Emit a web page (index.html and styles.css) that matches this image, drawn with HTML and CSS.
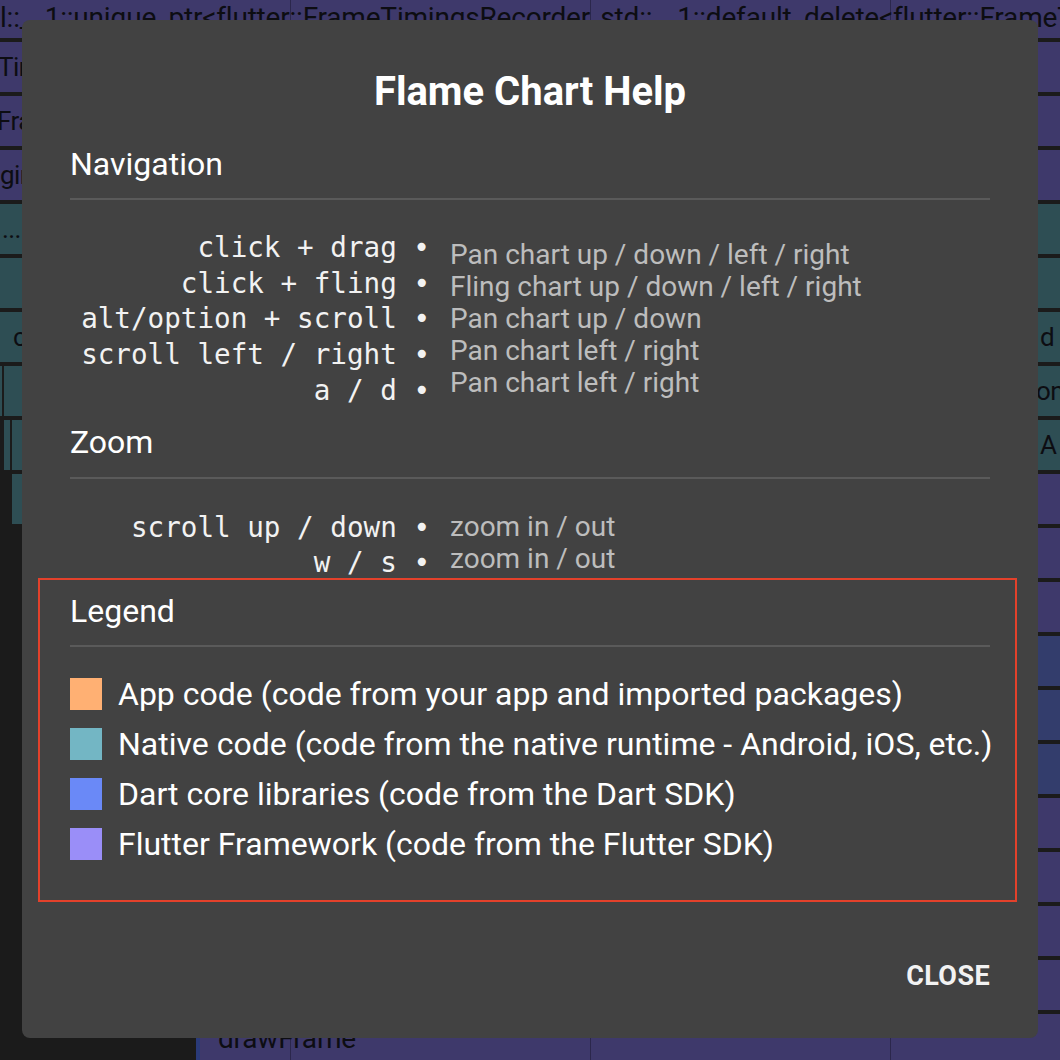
FILE: index.html
```html
<!DOCTYPE html>
<html lang="en">
<head>
<meta charset="utf-8">
<title>Flame Chart Help</title>
<link rel="stylesheet" href="styles.css">
</head>
<body>
<div class="chart">
  <div class="node purple" style="left:-4px;top:-12px;width:1070px"><span class="label big lower">l::__1::unique_ptr&lt;flutter::FrameTimingsRecorder, std::__1::default_delete&lt;flutter::FrameTimingsRecorder&gt;&gt;</span></div>

  <div class="node purple" style="left:-6px;top:42px;width:200px"><span class="label">Timeline</span></div>
  <div class="node purple" style="left:-7px;top:96px;width:200px"><span class="label">Frame</span></div>
  <div class="node purple" style="left:-4px;top:150px;width:210px"><span class="label">gin</span></div>
  <div class="node teal" style="left:-2px;top:204px;width:200px"><span class="label">...</span></div>
  <div class="node teal" style="left:0;top:258px;width:200px"></div>
  <div class="node teal" style="left:0;top:312px;width:260px"><span class="label inset">c</span></div>
  <div class="node teal" style="left:-40px;top:366px;width:42px"></div>
  <div class="node teal" style="left:4px;top:366px;width:200px"></div>
  <div class="node teal" style="left:4px;top:420px;width:6px"></div>
  <div class="node teal" style="left:12px;top:420px;width:200px"></div>
  <div class="node teal" style="left:12px;top:474px;width:200px"></div>

  <div class="node purple" style="left:900px;top:42px;width:200px"></div>
  <div class="node purple" style="left:900px;top:96px;width:200px"></div>
  <div class="node purple" style="left:900px;top:150px;width:200px"></div>
  <div class="node teal" style="left:900px;top:204px;width:200px"></div>
  <div class="node teal" style="left:900px;top:258px;width:200px"></div>
  <div class="node teal" style="left:1036px;top:312px;width:100px"><span class="label">d</span></div>
  <div class="node teal" style="left:1032px;top:366px;width:100px"><span class="label">on</span></div>
  <div class="node teal" style="left:1036px;top:420px;width:100px"><span class="label">A</span></div>
  <div class="node purple" style="left:900px;top:474px;width:200px"></div>
  <div class="node purple" style="left:900px;top:528px;width:200px"></div>
  <div class="node purple" style="left:900px;top:582px;width:200px"></div>
  <div class="node blue" style="left:900px;top:636px;width:200px"></div>
  <div class="node blue" style="left:900px;top:690px;width:200px"></div>
  <div class="node blue" style="left:900px;top:744px;width:200px"></div>
  <div class="node purple" style="left:900px;top:798px;width:200px"></div>
  <div class="node purple" style="left:900px;top:852px;width:200px"></div>
  <div class="node purple" style="left:900px;top:906px;width:200px"></div>
  <div class="node purple" style="left:900px;top:960px;width:200px"></div>
  <div class="node purple edge" style="left:196px;top:1014px;width:900px"><span class="label big wide">drawFrame</span></div>

  <div class="gridline" style="left:290px"></div>
  <div class="gridline" style="left:590px"></div>
  <div class="gridline" style="left:890px"></div>
</div>

<div class="dialog" role="dialog" aria-labelledby="dlg-title">
  <h1 class="dialog-title" id="dlg-title">Flame Chart Help</h1>

  <section class="section">
    <h2 class="section-title">Navigation</h2>
    <div class="divider"></div>
    <div class="shortcuts">
      <div class="keys">
        <div class="key">click + drag •</div>
        <div class="key">click + fling •</div>
        <div class="key">alt/option + scroll •</div>
        <div class="key">scroll left / right •</div>
        <div class="key">a / d •</div>
      </div>
      <div class="descs">
        <div class="desc">Pan chart up / down / left / right</div>
        <div class="desc">Fling chart up / down / left / right</div>
        <div class="desc">Pan chart up / down</div>
        <div class="desc">Pan chart left / right</div>
        <div class="desc">Pan chart left / right</div>
      </div>
    </div>
  </section>

  <section class="section zoom">
    <h2 class="section-title">Zoom</h2>
    <div class="divider"></div>
    <div class="shortcuts">
      <div class="keys">
        <div class="key">scroll up / down •</div>
        <div class="key">w / s •</div>
      </div>
      <div class="descs">
        <div class="desc">zoom in / out</div>
        <div class="desc">zoom in / out</div>
      </div>
    </div>
  </section>

  <section class="section legend">
    <h2 class="section-title">Legend</h2>
    <div class="divider"></div>
    <ul class="legend-list">
      <li class="legend-item"><span class="swatch app"></span>App code (code from your app and imported packages)</li>
      <li class="legend-item"><span class="swatch native"></span>Native code (code from the native runtime - Android, iOS, etc.)</li>
      <li class="legend-item"><span class="swatch dart"></span>Dart core libraries (code from the Dart SDK)</li>
      <li class="legend-item"><span class="swatch flutter"></span>Flutter Framework (code from the Flutter SDK)</li>
    </ul>
  </section>

  <div class="actions">
    <button class="close-btn" type="button">CLOSE</button>
  </div>
</div>
</body>
</html>
```

FILE: styles.css
```css
html, body {
  margin: 0;
  padding: 0;
}

body {
  width: 1060px;
  height: 1060px;
  overflow: hidden;
  position: relative;
  background: #1b1b1b;
  font-family: Roboto, "Noto Sans", sans-serif;
}

/* ---------- flame chart backdrop (free canvas) ---------- */
.chart {
  position: absolute;
  inset: 0;
  overflow: hidden;
}

.node {
  position: absolute;
  height: 50px;
  box-sizing: border-box;
  overflow: hidden;
  white-space: nowrap;
}

.node.purple { background: #3e396b; }
.node.teal { background: #2e4e54; }
.node.blue { background: #333d6c; }
.node.edge { border-left: 4px solid #2a3a78; }

.label {
  display: block;
  padding-left: 4px;
  font-family: Roboto, sans-serif;
  font-size: 26px;
  line-height: 50px;
  letter-spacing: -0.6px;
  color: #0d0d12;
}

.label.big {
  font-size: 28px;
  letter-spacing: -0.2px;
}

.label.lower {
  padding-top: 5px;
}

.label.wide {
  padding-left: 18px;
}

.label.inset {
  padding-left: 13px;
}

.gridline {
  position: absolute;
  top: 0;
  bottom: 0;
  width: 1px;
  background: rgba(20, 18, 40, 0.45);
}

/* ---------- dialog ---------- */
.dialog {
  position: absolute;
  left: 22px;
  top: 20px;
  width: 1016px;
  height: 1018px;
  box-sizing: border-box;
  padding: 48px 48px 46px 48px;
  background: #424242;
  border-radius: 8px;
  display: flex;
  flex-direction: column;
  color: #ffffff;
}

.dialog-title {
  margin: 0;
  font-size: 40px;
  line-height: 48px;
  font-weight: 700;
  text-align: center;
  color: #ffffff;
}

.section {
  display: flex;
  flex-direction: column;
}

.section-title {
  margin: 0;
  font-size: 32px;
  line-height: 38px;
  font-weight: 400;
  color: #ffffff;
}

.dialog-title + .section .section-title {
  margin-top: 29px;
}

.divider {
  height: 2px;
  margin-top: 15px;
  background: #5a5a5a;
}

.shortcuts {
  display: flex;
  align-items: center;
  gap: 20px;
  margin-top: 30px;
}

.keys {
  width: 360px;
  display: flex;
  flex-direction: column;
  text-align: right;
  font-family: "DejaVu Sans Mono", monospace;
  font-size: 27.6px;
  line-height: 35.7px;
  color: #f2f2f2;
  white-space: pre;
}

.descs {
  display: flex;
  flex-direction: column;
  font-size: 28px;
  line-height: 32px;
  color: #bdbdbd;
  white-space: nowrap;
}

/* zoom section */
.zoom .section-title {
  margin-top: 14px;
}

.zoom .divider {
  margin-top: 16px;
}

.zoom .shortcuts {
  margin-top: 31px;
}

.zoom .descs {
  margin-bottom: 5px;
}

/* legend: annotated with a red outline */
.legend {
  margin: -3px -27px 0 -32px;
  padding: 12px 25px 40px 30px;
  border: 2px solid #e3412b;
}

.legend-list {
  list-style: none;
  margin: 31px 0 0 0;
  padding: 0;
  display: flex;
  flex-direction: column;
  gap: 18px;
}

.legend-item {
  display: flex;
  align-items: center;
  gap: 16px;
  height: 32px;
  font-size: 32px;
  line-height: 32px;
  color: #ffffff;
  white-space: nowrap;
}

.swatch {
  flex: none;
  width: 32px;
  height: 32px;
}

.swatch.app { background: #ffb073; }
.swatch.native { background: #73b6c4; }
.swatch.dart { background: #6a89f7; }
.swatch.flutter { background: #9a8ef8; }

.actions {
  margin-top: auto;
  display: flex;
  justify-content: flex-end;
}

.close-btn {
  margin: 0;
  padding: 0;
  border: 0;
  background: transparent;
  font-family: Roboto, sans-serif;
  font-size: 27px;
  line-height: 32px;
  font-weight: 700;
  letter-spacing: 0.4px;
  color: #f2f2f2;
  cursor: pointer;
}
```
